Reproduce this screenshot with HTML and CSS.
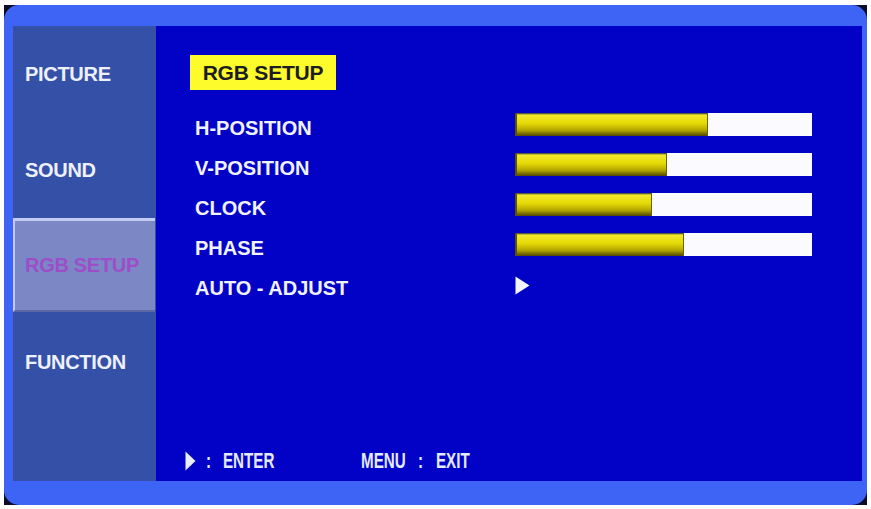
FILE: index.html
```html
<!DOCTYPE html>
<html lang="en">
<head>
<meta charset="utf-8">
<title>RGB SETUP</title>
<link rel="stylesheet" href="styles.css">
</head>
<body>
<div class="screen">
  <div class="bezel">
    <nav class="sidebar">
      <div class="tab">PICTURE</div>
      <div class="tab">SOUND</div>
      <div class="tab tab-active">RGB SETUP</div>
      <div class="tab">FUNCTION</div>
    </nav>
    <main class="main">
      <div class="title">RGB SETUP</div>
      <div class="rows">
        <div class="row">
          <span class="label">H-POSITION</span>
          <div class="bar"><div class="fill" style="width:193px"></div></div>
        </div>
        <div class="row">
          <span class="label">V-POSITION</span>
          <div class="bar"><div class="fill" style="width:152px"></div></div>
        </div>
        <div class="row">
          <span class="label">CLOCK</span>
          <div class="bar"><div class="fill" style="width:137px"></div></div>
        </div>
        <div class="row">
          <span class="label">PHASE</span>
          <div class="bar"><div class="fill" style="width:169px"></div></div>
        </div>
        <div class="row">
          <span class="label">AUTO - ADJUST</span>
          <svg class="go" width="15" height="19" viewBox="0 0 15 19"><polygon points="0.5,0.5 14.5,9.5 0.5,18.5" fill="#f2f4ff"/></svg>
        </div>
      </div>
      <div class="footer">
        <span class="f-item f-arrow"><svg width="11" height="20" viewBox="0 0 11 20"><polygon points="0.5,0.5 10.5,10 0.5,19.5" fill="#e8ecff"/></svg></span>
        <span class="f-item f-colon"><span class="f-text">:</span></span>
        <span class="f-item f-enter"><span class="f-text">ENTER</span></span>
        <span class="f-item f-menu"><span class="f-text">MENU</span></span>
        <span class="f-item f-colon2"><span class="f-text">:</span></span>
        <span class="f-item"><span class="f-text">EXIT</span></span>
      </div>
    </main>
  </div>
</div>
</body>
</html>
```
FILE: styles.css
```css
html, body {
  margin: 0;
  padding: 0;
  background: #ffffff;
}

body {
  font-family: "Liberation Sans", Arial, sans-serif;
  font-weight: bold;
}

.screen {
  margin: 5px 0 0 4px;
  width: 863px;
  height: 500px;
  background: #0b0b2a;
}

.bezel {
  box-sizing: border-box;
  height: 100%;
  border-radius: 15px;
  background: #3e64f6;
  padding: 21px 5px 24px 9px;
  display: flex;
}

.sidebar {
  width: 143px;
  background: #3550a7;
  display: flex;
  flex-direction: column;
}

.tab {
  height: 96px;
  display: flex;
  align-items: center;
  padding-left: 12px;
  font-size: 20px;
  letter-spacing: -0.3px;
  color: #eef1fb;
}

.tab-active {
  box-sizing: border-box;
  height: 94px;
  margin-bottom: 2px;
  margin-right: 1px;
  padding-left: 10px;
  background: #7c87c5;
  border-top: 3px solid #c2cbf3;
  border-left: 2px solid #c2cbf3;
  border-bottom: 2px solid #5c67a6;
  color: #9c4ec9;
}

.main {
  flex: 1;
  background: #0202c6;
  display: flex;
  flex-direction: column;
  padding: 29px 0 0 34px;
}

.title {
  width: 146px;
  height: 35px;
  line-height: 35px;
  background: #fdfb2c;
  color: #1c1c22;
  font-size: 21px;
  letter-spacing: -0.2px;
  text-align: center;
}

.rows {
  margin-top: 18px;
  display: flex;
  flex-direction: column;
}

.row {
  height: 40px;
  display: flex;
  align-items: flex-start;
}

.label {
  box-sizing: border-box;
  width: 325px;
  padding-left: 5px;
  line-height: 40px;
  font-size: 20px;
  color: #f0f3ff;
  white-space: nowrap;
}

.bar {
  margin-top: 5px;
  width: 297px;
  height: 23px;
  background: #fbfbff;
  display: flex;
}

.fill {
  height: 100%;
  background: linear-gradient(#2a2a40 0px, #f2ea2e 2px, #e4da06 45%, #b3a600 75%, #4e4600 100%);
  box-shadow: inset 2px 0 0 #5a5200, inset -1px 0 0 #6e6400;
}

.go {
  margin-top: 8px;
}

.footer {
  margin-top: auto;
  margin-left: -5px;
  height: 40px;
  display: flex;
  align-items: center;
  color: #e4eaff;
  font-size: 22px;
}

.f-item {
  display: block;
  white-space: nowrap;
  line-height: 40px;
  height: 40px;
  display: flex;
  align-items: center;
}

.f-arrow { width: 21px; }
.f-colon { width: 17px; }
.f-enter { width: 138px; }
.f-menu { width: 57px; }
.f-colon2 { width: 18px; }

.f-text {
  display: inline-block;
  transform: scaleX(0.69);
  transform-origin: left center;
}
```
